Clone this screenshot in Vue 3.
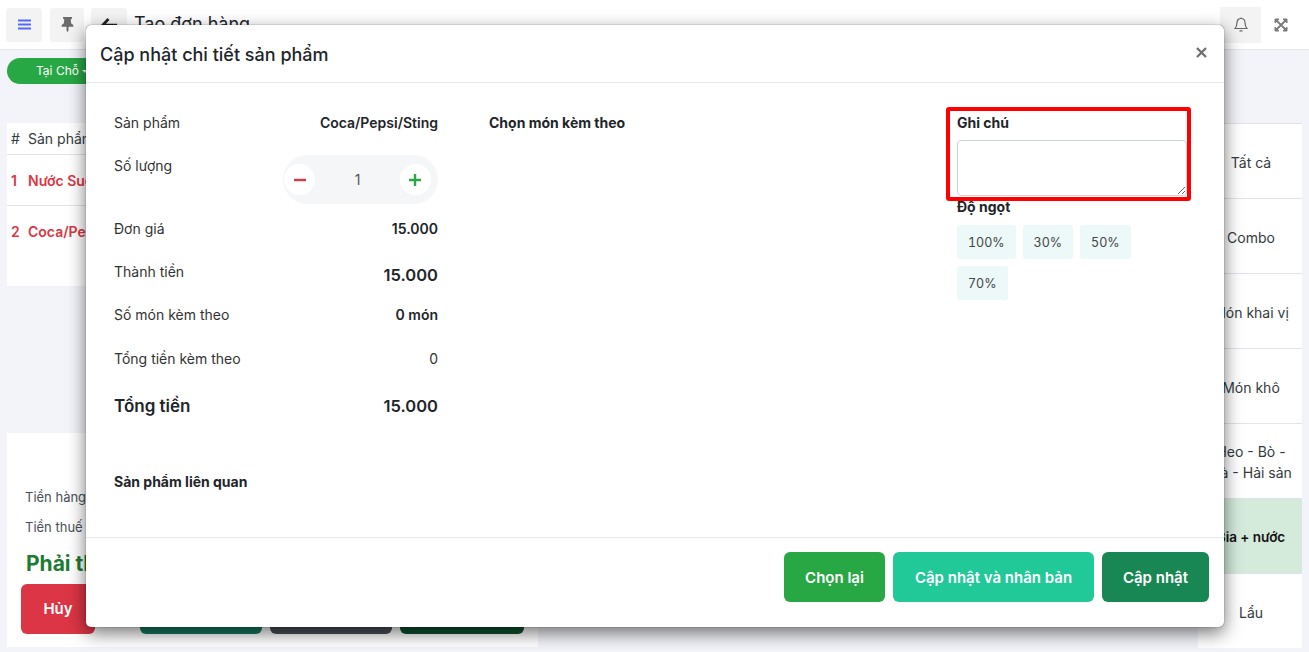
<template>
  <div class="page">
    <header class="topbar">
      <button class="tool tool-menu">
        <svg width="13" height="11" viewBox="0 0 13 11"><path d="M0 1.500h13M0 5.500h13M0 9.500h13" stroke="#5468ff" stroke-width="2" /></svg>
      </button>
      <button class="tool tool-pin">
        <svg width="13" height="15" viewBox="0 0 13 15"><path d="M2 0h9v1.500l-1.300 1 .5 4c1.500.7 2.300 1.800 2.300 3.200H7.500v3.800l-1 1.500-1-1.500V9.700H.5c0-1.400.8-2.500 2.300-3.200l.5-4-1.300-1z" fill="#6c6c6c" /></svg>
      </button>
      <button class="tool tool-back">
        <svg width="16" height="14" viewBox="0 0 16 14"><path d="M7.500 1L1.800 7l5.700 6M2 7h14" fill="none" stroke="#222" stroke-width="2.600" /></svg>
      </button>
      <span class="page-title">Tạo đơn hàng</span>
      <div class="topbar-right">
        <button class="tool tool-bell">
          <svg width="14" height="16" viewBox="0 0 14 16"><path d="M7 1.500c-2.500 0-4 1.900-4 4.300 0 3-.8 4.200-2 5.700h12c-1.200-1.500-2-2.700-2-5.700 0-2.400-1.500-4.300-4-4.300zM5.500 13.800h3M7 .5v1" fill="none" stroke="#666" stroke-width="1.200" /></svg>
        </button>
        <button class="tool tool-expand">
          <svg width="14" height="14" viewBox="0 0 14 14"><path d="M1 5V1h4zM13 5V1H9zM1 9v4h4zM13 9v4H9z" fill="#7a7a7a" stroke="#7a7a7a" /><path d="M2 2l10 10M12 2L2 12" stroke="#7a7a7a" stroke-width="1.800" /></svg>
        </button>
      </div>
    </header>

    <main class="content">
      <section class="left">
        <div class="order-type">Tại Chỗ <span class="caret"></span></div>
        <div class="order-table">
          <div class="row row-head"><span class="num">#</span><span>Sản phẩm</span></div>
          <div class="row row-item"><span class="num">1</span><span>Nước Suối</span></div>
          <div class="row row-item"><span class="num">2</span><span>Coca/Pepsi/Sting</span></div>
        </div>
        <div class="summary">
          <div class="sum-line">Tiền hàng</div>
          <div class="sum-line">Tiền thuế</div>
          <div class="sum-total">Phải thu</div>
          <div class="actions">
            <div class="act act-red">Hủy</div>
            <div class="act act-teal"></div>
            <div class="act act-gray"></div>
            <div class="act act-dark"></div>
          </div>
        </div>
      </section>
      <nav class="cats">
        <div v-for="c in cats" :key="c" class="cat" :class="{ 'cat-on': c === 'Bia + nước' }">{{ c }}</div>
      </nav>
    </main>

    <div class="modal">
      <div class="modal-head">
        <h2>Cập nhật chi tiết sản phẩm</h2>
        <svg class="close" width="11" height="11" viewBox="0 0 11 11"><path d="M1 1l9 9M10 1l-9 9" stroke="#6d6d6d" stroke-width="2.200" /></svg>
      </div>
      <div class="modal-body">
        <div class="col-info">
          <div class="info info-1"><span>Sản phẩm</span><b>Coca/Pepsi/Sting</b></div>
          <div class="info info-qty">
            <span>Số lượng</span>
            <div class="stepper">
              <button class="step">
                <svg width="12" height="12" viewBox="0 0 12 12"><path d="M0 6h12" stroke="#dc3545" stroke-width="2.400" /></svg>
              </button>
              <span class="qty">1</span>
              <button class="step">
                <svg width="12" height="12" viewBox="0 0 12 12"><path d="M0 6h12M6 0v12" stroke="#28a745" stroke-width="2.400" /></svg>
              </button>
            </div>
          </div>
          <div class="info info-price"><span>Đơn giá</span><b>15.000</b></div>
          <div class="info info-sub"><span>Thành tiền</span><b class="big">15.000</b></div>
          <div class="info info-count"><span>Số món kèm theo</span><b>0 món</b></div>
          <div class="info info-extra"><span>Tổng tiền kèm theo</span><em>0</em></div>
          <div class="info info-total"><strong>Tổng tiền</strong><b class="big">15.000</b></div>
          <div class="related">Sản phẩm liên quan</div>
        </div>
        <div class="col-extra">
          <div class="heading">Chọn món kèm theo</div>
        </div>
        <div class="col-note">
          <div class="marker"></div>
          <div class="heading">Ghi chú</div>
          <textarea class="note"></textarea>
          <div class="heading heading-sweet">Độ ngọt</div>
          <div class="chips">
            <span v-for="s in sweet" :key="s" class="chip">{{ s }}</span>
          </div>
        </div>
      </div>
      <div class="modal-foot">
        <button class="btn btn-reset">Chọn lại</button>
        <button class="btn btn-copy">Cập nhật và nhân bản</button>
        <button class="btn btn-save">Cập nhật</button>
      </div>
    </div>
  </div>
</template>

<script setup>
const cats = ['Tất cả', 'Combo', 'Món khai vị', 'Món khô', 'Heo - Bò - Gà - Hải sản', 'Bia + nước', 'Lẩu']
const sweet = ['100%', '30%', '50%', '70%']
</script>

<style>
html, body { margin: 0; overflow: hidden; }
</style>

<style scoped>
.page {
  position: relative;
  height: 652px;
  overflow: hidden;
  background: #f3f4f9;
  color: #212529;
  font-family: Inter, "Noto Sans", sans-serif;
  font-size: 14px;
}

.topbar {
  display: flex;
  align-items: center;
  height: 49px;
  background: #fff;
  border-bottom: 1px solid #e3e5ea;
  padding-left: 6px;
}
.tool {
  display: flex;
  align-items: center;
  justify-content: center;
  height: 34px;
  padding: 0;
  border: 0;
  border-radius: 3px;
  background: #f3f3f3;
}
.tool-menu { width: 36px; margin-right: 8px; }
.tool-pin { width: 34px; margin-right: 7px; }
.tool-back { width: 36px; margin-right: 7px; }
.page-title { font-size: 18px; margin-top: -3px; }
.topbar-right { display: flex; margin-left: auto; margin-right: 8px; }
.tool-bell { width: 41px; height: 36px; border-radius: 0; }
.tool-expand { width: 40px; height: 36px; background: #fff; }

.content {
  display: flex;
  justify-content: space-between;
  padding: 0 7px;
}
.left { width: 531px; }
.order-type {
  width: 110px;
  height: 26px;
  margin-top: 8px;
  border-radius: 13px;
  background: #28a745;
  color: #fff;
  font-size: 12px;
  line-height: 26px;
  padding-left: 29px;
  box-sizing: border-box;
}
.caret {
  display: inline-block;
  border: 3px solid transparent;
  border-top-color: #fff;
  border-bottom: 0;
  vertical-align: middle;
}
.order-table {
  height: 163px;
  margin-top: 39px;
  background: #fff;
}
.row {
  display: flex;
  align-items: center;
  gap: 10px;
  padding-left: 4px;
  border-bottom: 1px solid #e1e3e8;
  white-space: nowrap;
}
.row-head { height: 31px; color: #343a40; }
.row-item { height: 50px; color: #dc3545; font-weight: 600; }
.row-item:last-child { border-bottom: 0; }
.num { width: 7px; }

.summary {
  height: 214px;
  margin-top: 147px;
  padding: 56px 14px 0 18px;
  box-sizing: border-box;
  background: #fff;
  font-size: 13px;
}
.sum-line { height: 30px; color: #495057; }
.sum-total {
  margin-left: 1px;
  font-size: 21px;
  font-weight: 700;
  line-height: 30px;
  color: #1c7c32;
}
.actions { display: flex; gap: 8px; margin-top: 5px; margin-left: -4px; }
.act { height: 50px; border-radius: 6px; }
.act-red {
  width: 74px;
  margin-right: 37px;
  background: #dc3545;
  color: #fff;
  font-size: 15px;
  font-weight: 600;
  line-height: 50px;
  text-align: center;
}
.act-teal { width: 122px; background: #157a60; }
.act-gray { width: 122px; background: #495057; }
.act-dark { width: 124px; background: #0d5230; }

.cats {
  width: 104px;
  margin-top: 73px;
  background: #fff;
  border-top: 1px solid #e1e3e8;
  height: 524px;
}
.cat {
  display: flex;
  align-items: center;
  justify-content: center;
  box-sizing: border-box;
  height: 75px;
  padding: 2px 9px 0 11px;
  border-bottom: 1px solid #e1e3e8;
  color: #343a40;
  text-align: center;
  line-height: 21px;
}
.cat-on { background: #d4ebdc; color: #111; font-weight: 600; font-size: 13.500px; }
.cat:last-child { border-bottom: 0; }

.modal {
  position: absolute;
  left: 86px;
  top: 25px;
  display: flex;
  flex-direction: column;
  width: 1138px;
  height: 602px;
  background: #fff;
  border-radius: 5px;
  box-shadow: 0 0 1px rgba(0, 0, 0, .8), 0 6px 18px rgba(0, 0, 0, .55);
}
.modal-head {
  display: flex;
  align-items: center;
  justify-content: space-between;
  flex-shrink: 0;
  box-sizing: border-box;
  height: 58px;
  padding: 0 17px 0 14px;
  border-bottom: 1px solid #e6e7ea;
}
.modal-head h2 { margin: 3px 0 0; font-size: 18px; font-weight: 500; line-height: 1; }
.close { margin-top: -3px; }

.modal-body {
  flex: 1;
  display: grid;
  grid-template-columns: 375px 468px 1fr;
  padding-left: 28px;
}
.col-info { width: 324px; padding-top: 31px; }
.col-extra { padding-top: 31px; }
.col-note { position: relative; width: 230px; padding-top: 31px; }

.info { display: flex; justify-content: space-between; align-items: baseline; line-height: 18px; }
.info span, .info em { color: #333; font-style: normal; }
.info b { font-weight: 600; }
.info-1 { height: 43px; }
.info-qty { height: 63px; align-items: flex-start; }
.info-price { height: 43px; }
.info-sub { height: 43px; align-items: flex-start; }
.info-count { height: 44px; }
.info-extra { height: 44px; }
.info-total { height: 38px; }
.info-total strong { font-size: 17px; font-weight: 600; line-height: 24px; }
.info .big { font-size: 16.500px; line-height: 24px; }

.stepper {
  display: flex;
  align-items: center;
  justify-content: space-between;
  box-sizing: border-box;
  width: 155px;
  height: 49px;
  margin-top: -2px;
  padding: 0 7px 0 1px;
  border-radius: 25px;
  background: #f5f6f8;
}
.step {
  display: flex;
  align-items: center;
  justify-content: center;
  width: 31px;
  height: 31px;
  padding: 0;
  border: 0;
  border-radius: 50%;
  background: #fff;
}
.info .qty { color: #555; }
.related { margin-top: 41px; font-weight: 700; line-height: 18px; }

.heading { font-weight: 700; line-height: 18px; }
.note {
  display: block;
  box-sizing: border-box;
  width: 230px;
  height: 56px;
  margin-top: 8px;
  border: 1px solid #ced4da;
  border-radius: 4px;
  background: #fff;
}
.heading-sweet { margin-top: 2px; }
.chips { display: flex; flex-wrap: wrap; gap: 7px; margin-top: 9px; }
.chip {
  padding: 9px 11px 7px;
  border-radius: 3px;
  background: #edf8f8;
  color: #444;
  font-size: 12.500px;
  font-variant-numeric: tabular-nums;
  line-height: 18px;
}
.marker {
  position: absolute;
  left: -11px;
  top: 24px;
  width: 245px;
  height: 94px;
  box-sizing: border-box;
  border: 4px solid #f00;
  border-radius: 3px;
  pointer-events: none;
}

.modal-foot {
  display: flex;
  justify-content: flex-end;
  gap: 8px;
  box-sizing: border-box;
  height: 90px;
  padding: 14px 15px 0 0;
  border-top: 1px solid #e6e7ea;
}
.btn {
  height: 50px;
  border: 0;
  border-radius: 6px;
  color: #fff;
  font-family: inherit;
  font-size: 15px;
  font-weight: 600;
}
.btn-reset { width: 101px; background: #28a745; }
.btn-copy { width: 201px; background: #20c997; }
.btn-save { width: 107px; background: #198754; }
</style>
